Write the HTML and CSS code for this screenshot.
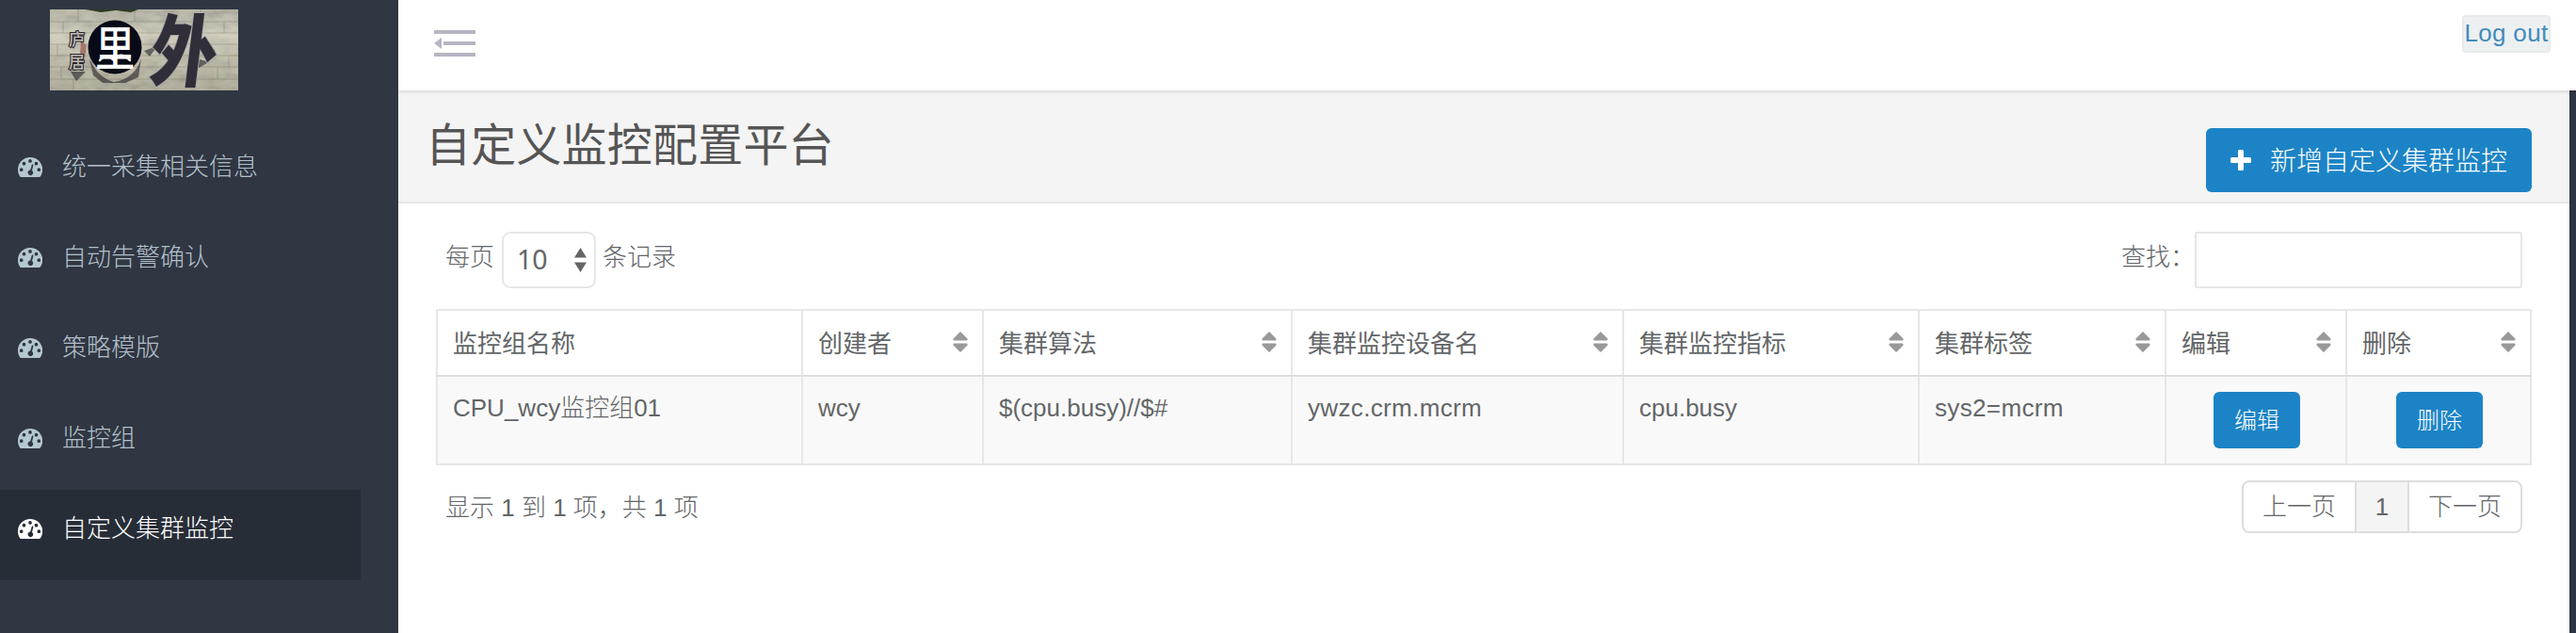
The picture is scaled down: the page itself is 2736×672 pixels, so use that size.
FILE: index.html
```html
<!DOCTYPE html>
<html lang="zh-CN">
<head>
<meta charset="utf-8">
<title>自定义监控配置平台</title>
<link rel="stylesheet" href="styles.css">
</head>
<body>
<svg class="defs" width="0" height="0" aria-hidden="true">
  <symbol id="gauge" viewBox="0 0 26 21">
    <path fill="currentColor" fill-rule="evenodd" d="M13 0A13 13 0 0 0 0 13c0 2.500.700 4.900 1.900 7 .400.700.800 1 1.500 1h19.200c.700 0 1.100-.300 1.500-1A13 13 0 0 0 13 0ZM3.700 11.300a1.850 1.850 0 1 1 0 3.700 1.850 1.850 0 0 1 0-3.700ZM6.500 4.800a1.850 1.850 0 1 1 0 3.700 1.850 1.850 0 0 1 0-3.700ZM13 2.100a1.850 1.850 0 1 1 0 3.700 1.850 1.850 0 0 1 0-3.700ZM19.500 4.800a1.850 1.850 0 1 1 0 3.700 1.850 1.850 0 0 1 0-3.700ZM22.300 11.300a1.850 1.850 0 1 1 0 3.700 1.850 1.850 0 0 1 0-3.700ZM15.800 7.600c.500.100.700.500.600 1l-1.400 5.400a2.850 2.850 0 1 1-1.800-.500l1.500-5.300c.100-.500.600-.700 1.100-.600Z"/>
  </symbol>
  <symbol id="sort" viewBox="0 0 16 22">
    <path fill="currentColor" d="M8 0 15.500 7.500Q16 9.500 14.500 9.500H1.500Q0 9.500 .500 7.500ZM8 22 .500 14.500Q0 12.500 1.500 12.500H14.500Q16 12.500 15.500 14.500Z"/>
  </symbol>
</svg>
<div class="app">
  <aside class="sidebar">
    <svg class="logo" viewBox="0 0 200 86" role="img" aria-label="logo">
      <defs>
        <filter id="wall" x="0" y="0" width="100%" height="100%">
          <feTurbulence type="fractalNoise" baseFrequency=".06 .13" numOctaves="4" seed="8"/>
          <feColorMatrix type="saturate" values=".15"/>
          <feComponentTransfer><feFuncA type="linear" slope="0" intercept="1"/></feComponentTransfer>
        </filter>
        <linearGradient id="shade" x1="0" y1="0" x2="0" y2="1">
          <stop offset="0" stop-color="#55564a" stop-opacity=".15"/>
          <stop offset=".3" stop-color="#d8d5c2" stop-opacity=".4"/>
          <stop offset="1" stop-color="#6d6850" stop-opacity=".3"/>
        </linearGradient>
      </defs>
      <rect width="200" height="86" fill="#d2cfb8"/>
      <rect width="200" height="86" filter="url(#wall)" opacity=".4"/>
      <rect width="200" height="86" fill="url(#shade)"/>
      <path fill="none" stroke="#5f5c46" stroke-opacity=".3" d="M0 13H200M0 25H200M0 37H200M0 49H200M0 61H200M0 74H200M30 0V13M90 0V13M160 0V13M14 13V25M185 13V25M8 37V49M190 49V61M25 74V86M178 61V74M12 61V74"/>
      <path fill="#2f3a20" d="M38 0H94L86 3 70 1 54 3Z"/>
      <path fill="#17141d" opacity=".55" d="M42 52Q50 72 68 77 90 74 97 52L94 72 80 78H56L46 70ZM100 44 114 39 106 50ZM156 52 169 56 158 62ZM22 66H38L28 76Z"/>
      <path fill="#8c3d38" opacity=".55" d="M33 34 39 38 37 52 32 46Z"/>
      <circle cx="69" cy="40" r="28.500" fill="#080a18"/>
      <text class="logo-small" x="20" y="38">庐</text>
      <text class="logo-small" x="20" y="62">居</text>
      <text class="logo-round" transform="translate(48 59.500) scale(.92 1.080)">里</text>
      <path fill="none" stroke="#fff" stroke-width="2.500" stroke-linecap="round" d="M53 54Q59 47 64 51L68 54 74 49Q79 48 85 54"/>
      <text class="logo-brush" transform="translate(104 75) skewX(-7) scale(.88 1.040)">外</text>
    </svg>
    <nav class="menu">
      <a class="menu-item"><svg class="gauge"><use href="#gauge"/></svg>统一采集相关信息</a>
      <a class="menu-item"><svg class="gauge"><use href="#gauge"/></svg>自动告警确认</a>
      <a class="menu-item"><svg class="gauge"><use href="#gauge"/></svg>策略模版</a>
      <a class="menu-item"><svg class="gauge"><use href="#gauge"/></svg>监控组</a>
      <a class="menu-item active"><svg class="gauge"><use href="#gauge"/></svg>自定义集群监控</a>
    </nav>
  </aside>
  <div class="main">
    <header class="topbar">
      <svg class="toggle" viewBox="0 0 44 28"><path fill="#b6b5c3" d="M0 0H44V4H0ZM10 12H44V16H10ZM0 24H44V28H0ZM0 14 8 8V20Z"/></svg>
      <a class="logout">Log out</a>
    </header>
    <div class="page">
      <div class="page-head">
        <h1 class="page-title">自定义监控配置平台</h1>
        <button class="btn btn-new"><svg class="plus" viewBox="0 0 22 22"><path fill="#fff" d="M9.500 0h3q1.500 0 1.500 1.500V8h6.500Q22 8 22 9.500v3q0 1.500-1.500 1.500H14v6.500q0 1.500-1.500 1.500h-3Q8 22 8 20.500V14H1.500Q0 14 0 12.500v-3Q0 8 1.500 8H8V1.500Q8 0 9.500 0Z"/></svg><span class="btn-label">新增自定义集群监控</span></button>
      </div>
      <div class="controls">
        <div class="length">每页<span class="select">10<svg class="select-arrows" viewBox="0 0 13 26"><path fill="#666" d="M6.500 0 13 10.500H0ZM6.500 26 0 15.500H13Z"/></svg></span>条记录</div>
        <label class="search"><span class="search-label">查找：</span><input class="search-input" type="text"></label>
      </div>
      <table class="grid">
        <colgroup><col class="c1"><col class="c2"><col class="c3"><col class="c4"><col class="c5"><col class="c6"><col class="c7"><col class="c8"></colgroup>
        <thead>
          <tr>
            <th><div class="th">监控组名称</div></th>
            <th><div class="th">创建者<svg class="sort"><use href="#sort"/></svg></div></th>
            <th><div class="th">集群算法<svg class="sort"><use href="#sort"/></svg></div></th>
            <th><div class="th">集群监控设备名<svg class="sort"><use href="#sort"/></svg></div></th>
            <th><div class="th">集群监控指标<svg class="sort"><use href="#sort"/></svg></div></th>
            <th><div class="th">集群标签<svg class="sort"><use href="#sort"/></svg></div></th>
            <th><div class="th">编辑<svg class="sort"><use href="#sort"/></svg></div></th>
            <th><div class="th">删除<svg class="sort"><use href="#sort"/></svg></div></th>
          </tr>
        </thead>
        <tbody>
          <tr>
            <td>CPU_wcy监控组01</td>
            <td>wcy</td>
            <td>$(cpu.busy)//$#</td>
            <td class="wide">ywzc.crm.mcrm</td>
            <td>cpu.busy</td>
            <td class="wide">sys2=mcrm</td>
            <td class="action"><button class="btn btn-row"><span class="btn-label">编辑</span></button></td>
            <td class="action"><button class="btn btn-row"><span class="btn-label">删除</span></button></td>
          </tr>
        </tbody>
      </table>
      <div class="footer">
        <div class="info">显示 1 到 1 项，共 1 项</div>
        <div class="pager"><a class="pg">上一页</a><a class="pg current">1</a><a class="pg">下一页</a></div>
      </div>
    </div>
  </div>
</div>
</body>
</html>
```
FILE: styles.css
```css
* { box-sizing: border-box; }
body {
  margin: 0;
  background: #2f3541;
  color: #636668;
  font: 300 26px/36px "Liberation Sans", "Noto Sans CJK SC", sans-serif;
}
.defs { display: block; height: 0; }
.app { display: flex; height: 672px; overflow: hidden; }

.sidebar { width: 423px; flex: none; background: #303642; padding-top: 10px; }
.logo { display: block; width: 200px; height: 86px; margin-left: 53px; overflow: visible; }
.logo-small { font-size: 17px; font-weight: 500; fill: #bdbab4; stroke: #29252b; stroke-width: 2px; paint-order: stroke; }
.logo-round { font-size: 46px; font-weight: 500; fill: #fff; }
.logo-brush { font-size: 80px; font-weight: 900; fill: #302f39; stroke: #aaa3a5; stroke-width: 2px; paint-order: stroke; }
.menu { display: flex; flex-direction: column; padding-top: 40px; }
.menu-item {
  display: flex;
  align-items: flex-start;
  width: 383px;
  height: 96px;
  padding: 23px 0 0 19px;
  color: #b2c0ca;
}
.menu-item.active { background: #272d37; color: #fff; }
.gauge { width: 26px; height: 21px; margin: 8px 21px 0 0; color: #b5c7d0; }
.active .gauge { color: #fff; }

.main { flex: 1; min-width: 0; }
.topbar {
  position: relative;
  display: flex;
  justify-content: space-between;
  align-items: flex-start;
  height: 96px;
  padding: 16px 27px 0 38px;
  background: #fff;
  box-shadow: 0 1px 4px rgba(0, 0, 0, .15);
}
.toggle { width: 44px; height: 28px; margin-top: 16px; }
.logout {
  width: 94px;
  height: 40px;
  border: 2px solid #e7eaec;
  border-radius: 4px;
  background: #edf0f1;
  color: #428bbb;
  letter-spacing: .3px;
  line-height: 35px;
  text-align: center;
  white-space: nowrap;
}
.page { width: 2306px; height: 576px; background: #fff; }
.page-head {
  display: flex;
  justify-content: space-between;
  height: 120px;
  padding: 0 40px 0 29px;
  background: #f4f4f4;
  border-bottom: 2px solid #e5e6e7;
}
.page-title { margin: 24px 0 0; font-size: 48px; font-weight: 400; line-height: 70px; letter-spacing: .2px; color: #555; }
.btn {
  display: flex;
  align-items: center;
  justify-content: center;
  border: 0;
  border-radius: 6px;
  background: #1c84c6;
  color: #fff;
  font-family: inherit;
  font-weight: 300;
}
.btn-label { padding-bottom: 3px; }
.btn-new { width: 346px; height: 68px; margin-top: 40px; font-size: 28px; padding: 0; }
.plus { width: 22px; height: 22px; margin-right: 20px; }

.controls { display: flex; justify-content: space-between; padding: 30px 50px 0 50px; }
.length { display: flex; line-height: 54px; }
.select {
  display: flex;
  align-items: center;
  justify-content: space-between;
  width: 100px;
  height: 60px;
  margin: 0 7px 0 8px;
  padding: 0 8px 2px 14px;
  border: 2px solid #e5e6e7;
  border-radius: 9px;
  font-family: "Noto Sans", sans-serif;
  font-size: 28.500px;
  font-weight: 400;
}
.select-arrows { width: 13px; height: 26px; margin-top: 2px; }
.search { display: flex; line-height: 54px; }
.search-label { width: 78px; }
.search-input { width: 348px; height: 60px; border: 2px solid #e5e6e7; border-radius: 2px; background: #fff; padding: 0 12px; }

.grid { width: 2226px; margin: 22px 0 0 40px; border-collapse: collapse; table-layout: fixed; }
.c1 { width: 388px; }
.c2 { width: 192px; }
.c3 { width: 328px; }
.c4 { width: 352px; }
.c5 { width: 314px; }
.c6 { width: 262px; }
.c7 { width: 192px; }
.c8 { width: 196px; }
.grid th, .grid td { border: 2px solid #e7e7e7; padding: 0 16px; text-align: left; }
.grid th { height: 70px; border-bottom-color: #ddd; font-weight: 400; }
.grid td { height: 94px; padding-top: 15px; vertical-align: top; background: #f9f9f9; }
.grid .wide { letter-spacing: .35px; }
.grid .action { padding: 16px 0 0 2px; }
.th { display: flex; justify-content: space-between; align-items: center; padding-top: 2px; }
.sort { width: 16px; height: 22px; margin: 0 -1px 5px 0; color: #999; }
.btn-row { width: 92px; height: 60px; margin: 0 auto; font-size: 24px; padding: 0; }

.footer { display: flex; justify-content: space-between; padding: 16px 50px 0 50px; }
.info { padding-top: 11px; }
.pager { display: flex; height: 56px; border: 2px solid #ddd; border-radius: 8px; overflow: hidden; line-height: 52px; }
.pg { width: 118px; text-align: center; }
.pg.current { width: 58px; background: #f4f4f4; border: solid #ddd; border-width: 0 2px; }
```
